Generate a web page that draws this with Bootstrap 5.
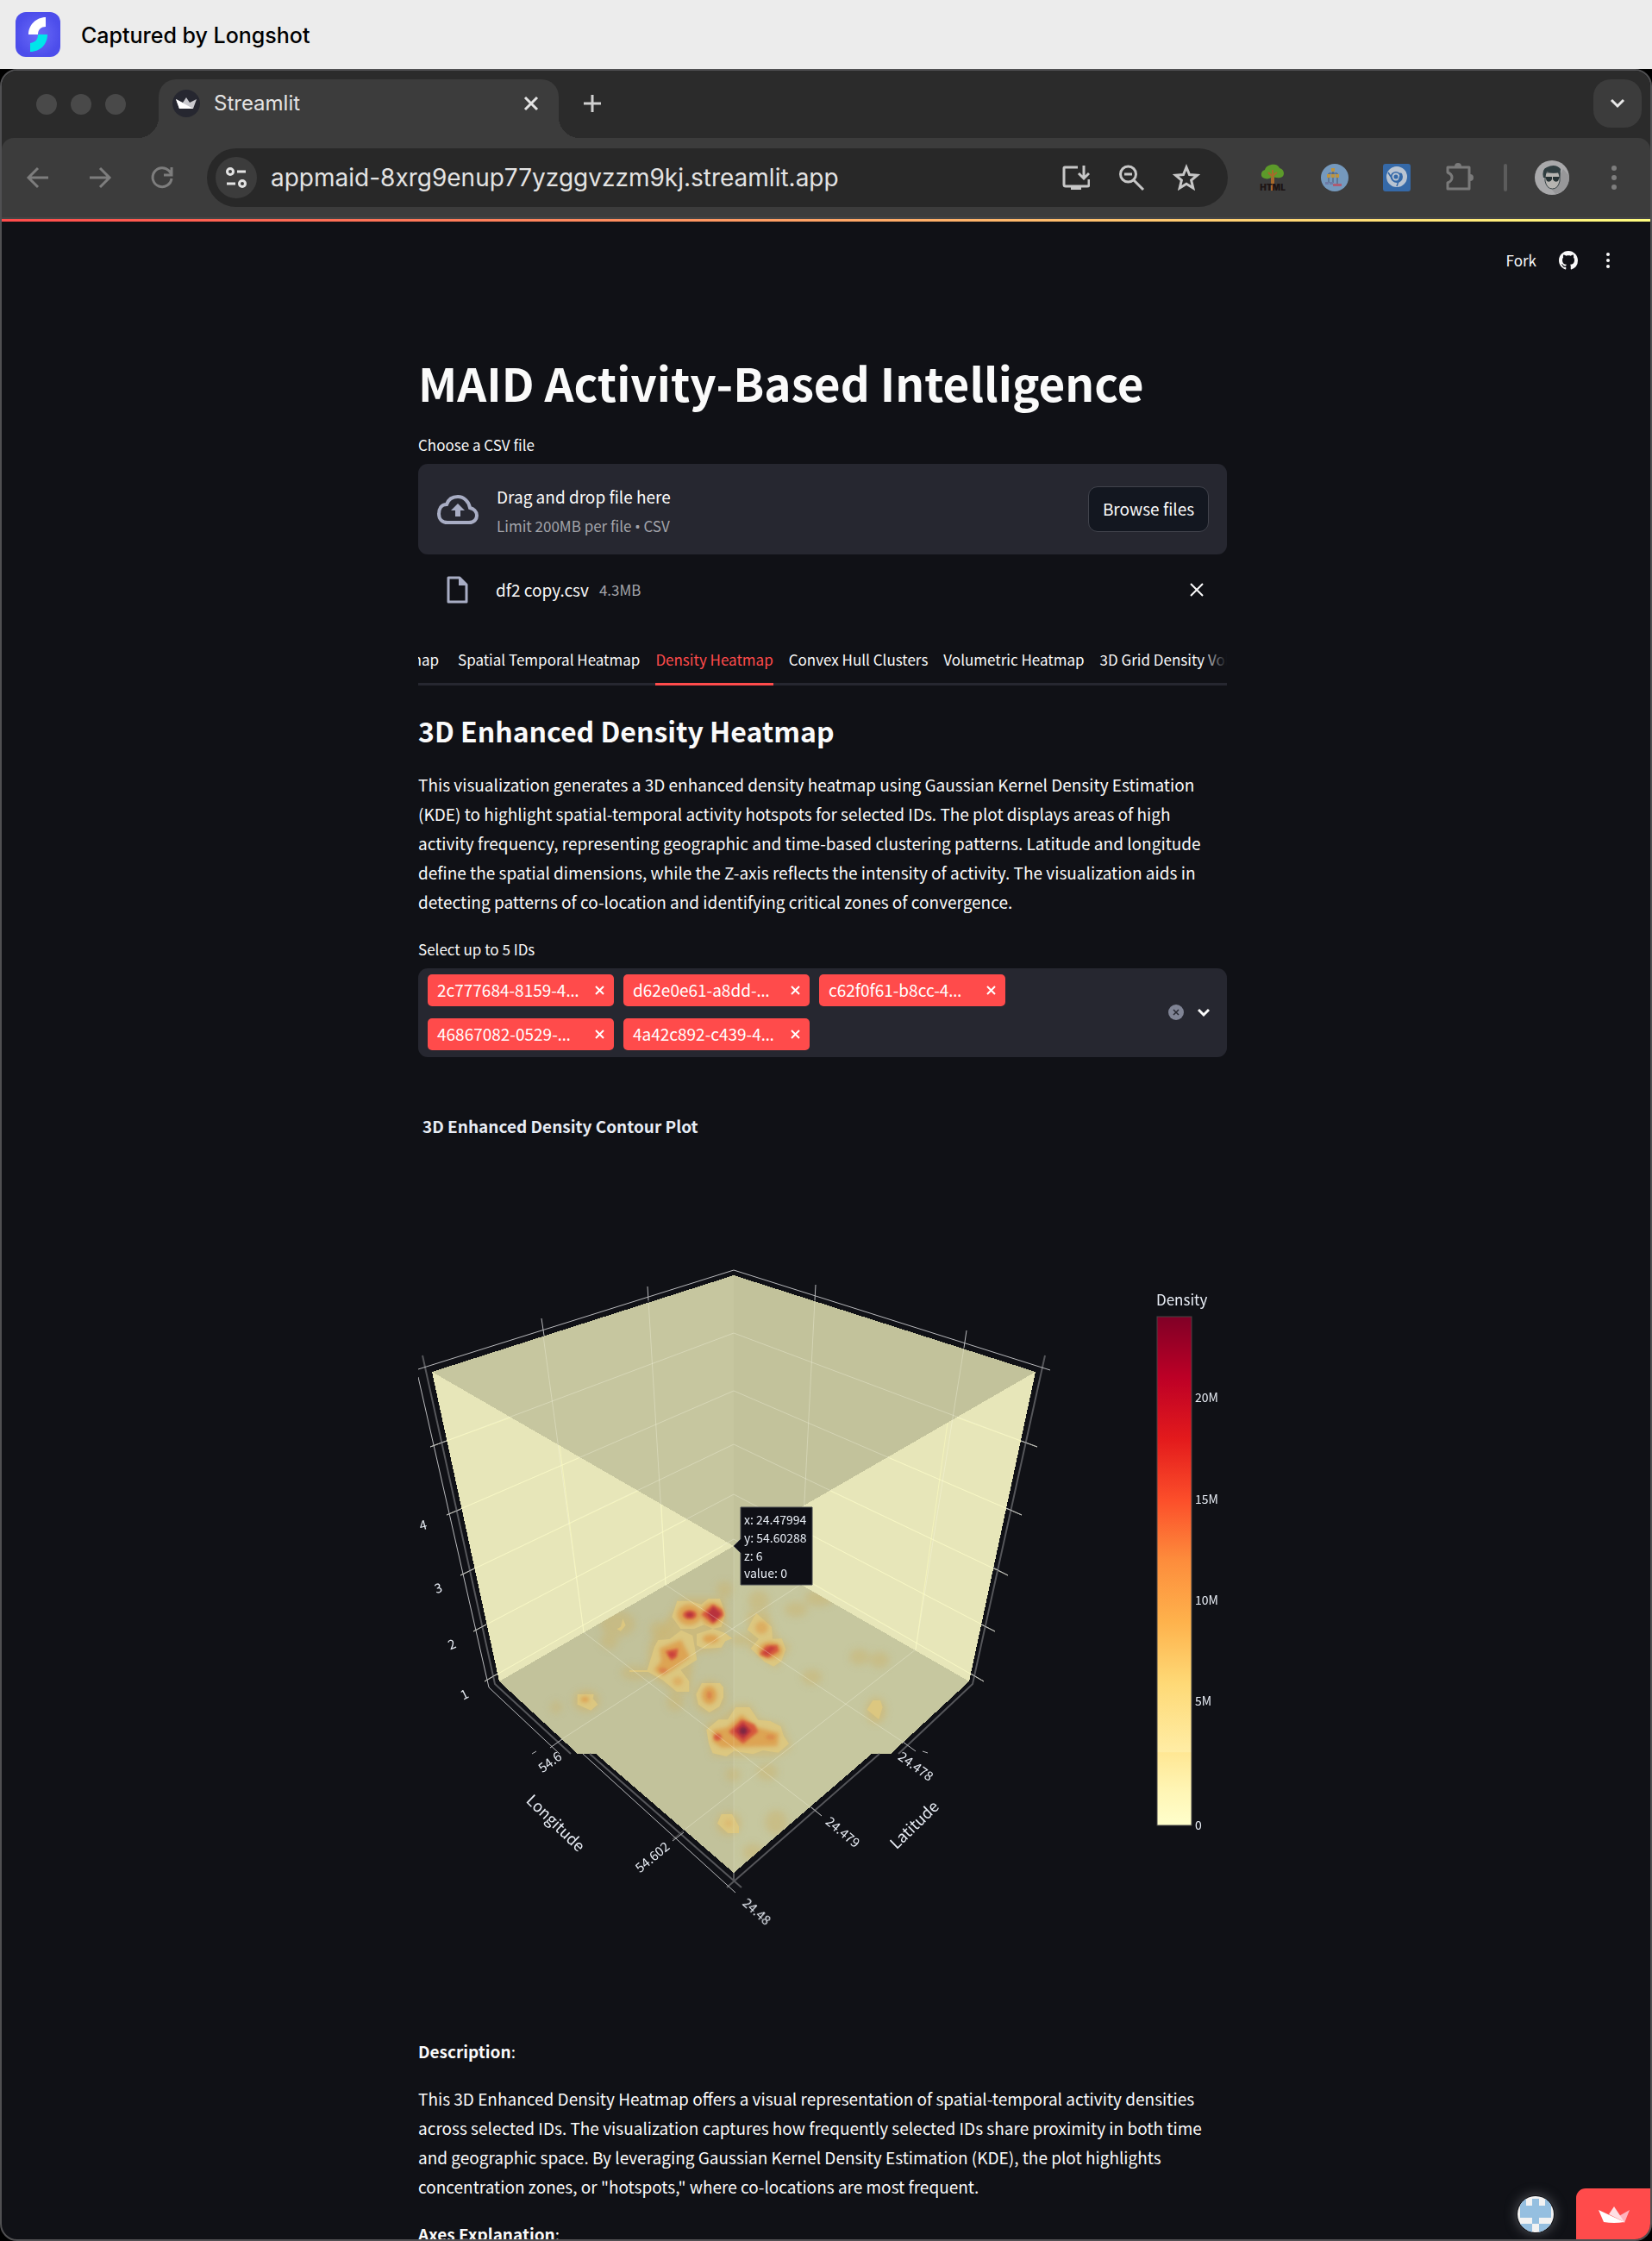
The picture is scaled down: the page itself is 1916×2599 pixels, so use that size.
<!DOCTYPE html>
<html lang="en">
<head>
<meta charset="utf-8">
<meta name="viewport" content="width=device-width, initial-scale=1">
<title>Streamlit</title>
<link href="https://cdn.jsdelivr.net/npm/bootstrap@5.3.0/dist/css/bootstrap.min.css" rel="stylesheet">
<style>
  :root { --ui: Inter, "Liberation Sans", sans-serif; --src: "Noto Sans CJK SC", "Noto Sans", sans-serif; }
  body { background: #000; height: 100vh; overflow: hidden; font-family: var(--src); color: #fafafa; }
  svg { display: block; flex: none; }
  button { font-family: inherit; font-weight: inherit; color: inherit; background: none; border: 0; padding: 0; }
  .capbar { height: 80px; background: #ececec; color: #000; font: 500 25px/80px var(--ui); padding-left: 18px; gap: 24px; }
  .capbar span { padding-top: 2px; }
  .win { border: 2px solid #505052; border-radius: 20px; background: #101116; min-height: 0; }
  .tabstrip { height: 78px; background: #2b2b2b; padding: 10px 10px 0 40px; font-family: var(--ui); }
  .lamps { padding-bottom: 10px; }
  .lamp { width: 24px; height: 24px; border-radius: 50%; background: #494949; }
  .btab { width: 464px; height: 68px; margin-left: 38px; background: #3c3c3c; border-radius: 20px 20px 0 0; padding: 0 21px 12px 16px; font-size: 24px; color: #e3e3e3; position: relative; }
  .btab::before, .btab::after { content: ""; position: absolute; bottom: 0; width: 24px; height: 24px; }
  .btab::before { right: 100%; background: radial-gradient(circle at 0 0, transparent 24px, #3c3c3c 24px); }
  .btab::after { left: 100%; background: radial-gradient(circle at 100% 0, transparent 24px, #3c3c3c 24px); }
  .menubtn { width: 56px; height: 56px; border-radius: 20px; background: #3c3c3c; }
  .under { background: #2b2b2b; }
  .toolbar { height: 94px; background: #3c3c3c; border-bottom: 2px solid #464646; padding: 0 38px 0 18px; color: #7d7d7d; border-radius: 14px 14px 0 0; }
  .navs { gap: 24px; margin-right: 28px; }
  .exts { gap: 32px; margin-left: 36px; }
  .pill { height: 68px; border-radius: 34px; background: #282828; padding: 0 32px 0 10px; }
  .site { width: 48px; height: 48px; border-radius: 50%; background: #3c3c3c; margin-right: 16px; }
  .pill input { background: none; border: 0; outline: 0; color: #e3e3e3; font: 400 28px/40px var(--ui); padding: 0; min-width: 0; }
  .rainbow { height: 3px; flex: none; background: linear-gradient(90deg, #ff4b4b, #fffd80); }
  .apphead { height: 90px; padding-right: 40px; gap: 26px; font-size: 17px; }
  .apphead a { color: #fafafa; text-decoration: none; }
  .page { max-width: 938px; width: 100%; margin-left: auto; margin-right: auto; padding-top: 61px; }
  .shift { padding-right: 8px; }
  h1 { font-size: 53px; line-height: 70px; font-weight: 700; margin-bottom: 26px; }
  h2 { font-size: 32px; line-height: 46px; font-weight: 700; margin: 29px 0 23px; }
  p, .para { font-size: 19px; line-height: 34px; margin: 0; }
  .fieldname { display: block; font-size: 17px; line-height: 24px; margin-bottom: 10px; }
  .idsname { margin-top: 26px; }
  .drop { height: 105px; background: #262730; border-radius: 11px; padding: 0 21px; }
  .droptext { padding-top: 5px; }
  .body19 { font-size: 19px; line-height: 34px; }
  .dim { font-size: 17px; line-height: 34px; color: #a3a4aa; }
  .browse { width: 140px; height: 53px; border: 1px solid #41434c; border-radius: 11px; background: #131720; font-size: 19px; }
  .filerow { height: 82px; padding: 0 26px 0 32px; }
  .tabs { margin-top: 13px; gap: 18px; overflow: hidden; box-shadow: inset 0 -3px #262730; position: relative; height: 57px; }
  .tabs button { font-size: 17px; white-space: nowrap; height: 57px; border-bottom: 3px solid transparent; flex: none; }
  .tabs .on { color: #ff4b4b; border-color: #ff4b4b; }
  .cutoff { width: 24px; overflow: hidden; flex: none; }
  .tabs::after { content: ""; position: absolute; right: 0; top: 0; width: 30px; height: 54px; background: linear-gradient(90deg, transparent, #101116); }
  .multi { background: #262730; border-radius: 11px; padding: 7px 20px 8px 11px; }
  .chips { gap: 14px 11px; }
  .chip { width: 216px; height: 37px; border-radius: 5px; background: #ff4b4b; padding: 0 11px; font-size: 19px; color: #fff; }
  .dots { font-family: "Noto Sans", sans-serif; }
  .chips input { width: 60px; height: 37px; border: 0; outline: 0; background: none; color: #fff; }
  .plot { margin-top: 44px; width: 100%; height: auto; }
  .plot text { fill: #e8edf5; font-family: var(--src); }
  .tick { font-size: 15px; text-anchor: middle; }
  .axis { font-size: 18px; text-anchor: middle; }
  .afterplot { margin-top: 32px; }
  .desc { margin-top: 21px; }
  .host { right: 111px; bottom: 7px; position: absolute; border-radius: 50%; box-shadow: 0 0 14px #55575c; }
  .crown { position: absolute; right: -2px; bottom: -2px; width: 88px; height: 61px; background: #ff4b4b; border-radius: 11px 0 20px 0; }
</style>
</head>
<body class="d-flex flex-column">

<div class="capbar d-flex align-items-center flex-shrink-0">
  <svg width="52" height="52" viewBox="0 0 52 52"><defs><radialGradient id="lg"><stop offset="0" stop-color="#6a6bf8"/><stop offset="1" stop-color="#4c4deb"/></radialGradient></defs><rect width="52" height="52" rx="12" fill="url(#lg)"/><path d="M15 26C15 15 24 6 35 6V17C30 17 26 20 26 26Z" fill="#fff"/><path d="M37 26C37 37 29 46 17 46V36C23 35 26 32 26 26Z" fill="#00e5ea"/></svg>
  <span>Captured by Longshot</span>
</div>

<div class="win d-flex flex-column flex-grow-1 position-relative overflow-hidden">
  <div class="tabstrip d-flex flex-shrink-0">
    <div class="lamps d-flex gap-3 align-items-center">
      <span class="lamp"></span><span class="lamp"></span><span class="lamp"></span>
    </div>
    <div class="btab d-flex align-items-center">
      <svg width="32" height="32" viewBox="0 0 32 32"><circle cx="16" cy="16" r="16" fill="#262730"/><path d="M4 11L12 15 16 9 20 15 28 11 24 22H8Z" fill="#c9c9ce"/><path d="M4 11L24 22H8Z" fill="#fff"/></svg>
      <span class="ms-3 flex-grow-1">Streamlit</span>
      <button type="button" aria-label="Close tab"><svg width="22" height="22" viewBox="0 0 22 22" stroke="#e3e3e3" stroke-width="3"><path d="M4 4L18 18M18 4L4 18"/></svg></button>
    </div>
    <button type="button" class="ms-4 ps-1 pb-2 mb-1" aria-label="New tab"><svg width="22" height="22" viewBox="0 0 22 22" stroke="#d0d0d0" stroke-width="3"><path d="M11 1V21M1 11H21"/></svg></button>
    <button type="button" class="menubtn ms-auto d-flex align-items-center justify-content-center" aria-label="Search tabs"><svg width="20" height="20" viewBox="0 0 20 20" fill="none" stroke="#e8e8e8" stroke-width="3"><path d="M3 6L10 13 17 6"/></svg></button>
  </div>
  <div class="under flex-shrink-0">
  <div class="toolbar d-flex align-items-center">
    <div class="navs d-flex">
      <button type="button" aria-label="Back"><svg width="48" height="48" viewBox="0 0 48 48" fill="none" stroke="currentColor" stroke-width="3"><path d="M36 24H14M24 13L13 24 24 35"/></svg></button>
      <button type="button" aria-label="Forward"><svg width="48" height="48" viewBox="0 0 48 48" fill="none" stroke="currentColor" stroke-width="3"><path d="M12 24H34M24 13L35 24 24 35"/></svg></button>
      <button type="button" aria-label="Reload"><svg width="48" height="48" viewBox="0 0 48 48" fill="none" stroke="currentColor" stroke-width="3"><path d="M35 25A11 11 0 1 1 32 16L34.500 19M35 12V21H26"/></svg></button>
    </div>
    <div class="pill d-flex align-items-center flex-grow-1">
      <button type="button" class="site d-flex align-items-center justify-content-center" aria-label="Site information"><svg width="28" height="28" viewBox="0 0 28 28" fill="none" stroke="#e3e3e3" stroke-width="3"><circle cx="7" cy="7" r="3.500"/><path d="M15 7H25M3 21H13"/><circle cx="21" cy="21" r="3.500"/></svg></button>
      <input class="flex-grow-1" type="text" aria-label="Address" value="appmaid-8xrg9enup77yzggvzzm9kj.streamlit.app">
      <div class="d-flex gap-4 align-items-center">
        <button type="button" aria-label="Install"><svg width="32" height="32" viewBox="0 0 32 32" fill="none" stroke="#c7c7c7" stroke-width="3"><path d="M18 4H3Q2 4 2 5V24Q2 26 4 26H29Q31 26 31 24V18M25 2V16M19 11L25 17 31 11"/><path d="M10 28H22" stroke-width="4"/></svg></button>
        <button type="button" class="mx-2" aria-label="Zoom"><svg width="32" height="32" viewBox="0 0 32 32" fill="none" stroke="#c7c7c7" stroke-width="3"><circle cx="12.500" cy="12" r="9"/><path d="M8 12H17M19 19L30 30"/></svg></button>
        <button type="button" aria-label="Bookmark"><svg width="32" height="32" viewBox="0 0 32 32" fill="none" stroke="#c7c7c7" stroke-width="3"><path d="M16 4L19.500 12.500 28.500 13.200 21.600 19 23.800 28 16 23.200 8.200 28 10.400 19 3.500 13.200 12.500 12.500Z"/></svg></button>
      </div>
    </div>
    <div class="exts d-flex align-items-center">
      <svg class="overflow-visible" width="32" height="32" viewBox="0 0 32 32"><path d="M14 14H18L18 31H14Z" fill="#a8692b"/><path d="M7 17C1 16 2 8 7 7 8 0 22-2 24 5 30 6 31 15 25 16 20 17 18 15 16 15 13 17 10 18 7 17Z" fill="#5c9a2a"/><path d="M16 20V7M16 15L11 10M16 14L21 10" stroke="#a8692b" stroke-width="2"/><text x="16" y="31" font-size="10" font-weight="900" font-family="Inter, sans-serif" text-anchor="middle" fill="#1d1414">HTML</text></svg>
      <svg class="ms-2" width="32" height="32" viewBox="0 0 32 32"><circle cx="16" cy="16" r="16" fill="#7599bd"/><path d="M14 9V11H9V22M14 11V22M14 11H19V23" fill="none" stroke="#4c5870"/><path d="M12 5h4v4h-4zM7 12h4v4H7zM12 12h4v4h-4zM17 12h4v4h-4z" fill="#bd9440"/><path d="M5 21h4v3H5zM10 21h4v3h-4z" fill="#6e7ba6"/><path d="M14 23h10v3H14z" fill="#ad5c72"/></svg>
      <svg class="ms-2" width="32" height="32" viewBox="0 0 32 32"><rect width="32" height="32" rx="3" fill="#3569a8"/><circle cx="16" cy="15" r="9.500" fill="none" stroke="#b9c4d2" stroke-width="5"/><path d="M6 10Q10 2 19 4L27 10 16 11Z" fill="#b9c4d2"/><circle cx="15" cy="15" r="6" fill="#3569a8"/><circle cx="15" cy="15" r="3.500" fill="none" stroke="#b9c4d2" stroke-width="2"/><path d="M20 14L16 26M11 18L6 10" stroke="#3569a8" stroke-width="1.500"/></svg>
      <svg class="ms-2" width="36" height="36" viewBox="0 0 36 36"><path d="M3 6H28V31H3V24Q8 22 8 18T3 12Z" fill="none" stroke="#7a7a7a" stroke-width="3" stroke-linejoin="round"/><path d="M11 5A4 4 0 0 1 19 5ZM29 14A4 4 0 0 1 29 22Z" fill="#7a7a7a"/></svg>
      <svg width="4" height="32"><rect width="4" height="32" rx="2" fill="#5c5c5c"/></svg>
      <svg width="40" height="40" viewBox="0 0 40 40"><circle cx="20" cy="20" r="20" fill="#a9a9ab"/><path d="M33 10L40 18A20 20 0 0 1 24 39L20 34Z" fill="#979799"/><path d="M12 14H29V24Q27 33 20.500 33 14 33 12 24Z" fill="#b6b4b1" stroke="#384346"/><path d="M10 20Q8 10 14 8 24 3 30 10L29 20 27 14Q20 16 14 13L12 20Z" fill="#2f3d40"/><path d="M12 19H20V22Q18 26 14 24ZM21 19H29L27 24Q23 26 21 22Z" fill="#263234"/></svg>
      <button type="button" class="ms-3" aria-label="Menu"><svg width="8" height="28" fill="#7d7d7d"><circle cx="4" cy="3" r="3"/><circle cx="4" cy="14" r="3"/><circle cx="4" cy="25" r="3"/></svg></button>
    </div>
  </div>
  </div>
  <div class="rainbow"></div>

  <header class="apphead d-flex justify-content-end align-items-center flex-shrink-0">
    <a href="#">Fork</a>
    <a href="#" aria-label="GitHub"><svg width="22" height="22" viewBox="0 0 16 16" fill="#fafafa"><path d="M8 0C3.580 0 0 3.580 0 8c0 3.540 2.290 6.530 5.470 7.590.4.070.55-.17.55-.38 0-.19-.01-.82-.01-1.490-2.010.37-2.530-.49-2.690-.94-.09-.23-.48-.94-.82-1.130-.28-.15-.68-.52-.01-.53.63-.01 1.080.58 1.230.82.72 1.210 1.870.87 2.330.66.07-.52.28-.87.51-1.070-1.780-.2-3.640-.89-3.640-3.950 0-.87.31-1.590.82-2.150-.08-.2-.36-1.020.08-2.120 0 0 .67-.21 2.200.82.64-.18 1.320-.27 2-.27s1.360.09 2 .27c1.530-1.040 2.200-.82 2.200-.82.44 1.100.16 1.920.08 2.120.51.56.82 1.270.82 2.150 0 3.070-1.870 3.750-3.650 3.950.29.25.54.73.54 1.480 0 1.070-.01 1.930-.01 2.200 0 .21.15.46.55.38A8 8 0 0 0 16 8c0-4.420-3.580-8-8-8z"/></svg></a>
    <button type="button" class="px-1" aria-label="App menu"><svg width="10" height="20" fill="#fafafa"><circle cx="5" cy="3" r="2"/><circle cx="5" cy="10" r="2"/><circle cx="5" cy="17" r="2"/></svg></button>
  </header>

  <div class="shift">
  <main class="page">
    <h1>MAID Activity-Based Intelligence</h1>

    <label class="fieldname" for="browse">Choose a CSV file</label>
    <div class="drop d-flex align-items-center">
      <svg width="50" height="36" viewBox="0 0 50 36"><path d="M13 33H38C44 33 47 29 47 25 47 20 43 17 39 16 38 9 32 3 25 3 19 3 14 6 12 12 6 12 3 17 3 23 3 29 7 33 13 33Z" fill="none" stroke="#a8adc4" stroke-width="4"/><path d="M25 11L33 19H28V26H22V19H17Z" fill="#a8adc4"/></svg>
      <div class="droptext ms-3 ps-1 d-flex flex-column flex-grow-1">
        <span class="body19">Drag and drop file here</span>
        <span class="dim">Limit 200MB per file <span class="dots">•</span> CSV</span>
      </div>
      <button type="button" id="browse" class="browse">Browse files</button>
    </div>
    <div class="filerow d-flex align-items-center">
      <svg width="26" height="32" viewBox="0 0 26 32"><path d="M3 2H16L24 10V30H3Z" fill="none" stroke="#a8adc4" stroke-width="3" stroke-linejoin="round"/><path d="M15 2V11H24Z" fill="#a8adc4"/></svg>
      <span class="body19 ms-4 ps-2">df2 copy.csv</span>
      <span class="dim ms-2 ps-1 flex-grow-1">4.3MB</span>
      <button type="button" aria-label="Remove file"><svg width="18" height="18" viewBox="0 0 18 18" stroke="#fafafa" stroke-width="2"><path d="M2 2L16 16M16 2L2 16"/></svg></button>
    </div>

    <div class="tabs d-flex" role="tablist">
      <div class="cutoff d-flex justify-content-end me-1"><button type="button" role="tab">Heatmap</button></div>
      <button type="button" role="tab">Spatial Temporal Heatmap</button>
      <button type="button" role="tab" class="on" aria-selected="true">Density Heatmap</button>
      <button type="button" role="tab">Convex Hull Clusters</button>
      <button type="button" role="tab">Volumetric Heatmap</button>
      <button type="button" role="tab">3D Grid Density Volume</button>
    </div>

    <h2>3D Enhanced Density Heatmap</h2>
    <p>This visualization generates a 3D enhanced density heatmap using Gaussian Kernel Density Estimation (KDE) to highlight spatial-temporal activity hotspots for selected IDs. The plot displays areas of high activity frequency, representing geographic and time-based clustering patterns. Latitude and longitude define the spatial dimensions, while the Z-axis reflects the intensity of activity. The visualization aids in detecting patterns of co-location and identifying critical zones of convergence.</p>

    <label class="fieldname idsname" for="ids">Select up to 5 IDs</label>
    <div class="multi d-flex align-items-center">
      <div class="chips d-flex flex-wrap flex-grow-1">
        <span class="chip d-flex align-items-center justify-content-between"><span>2c777684-8159-4<span class="dots">…</span></span><button type="button" aria-label="Remove"><svg width="11" height="11" viewBox="0 0 11 11" stroke="#fff" stroke-width="2"><path d="M1 1L10 10M10 1L1 10"/></svg></button></span>
        <span class="chip d-flex align-items-center justify-content-between"><span>d62e0e61-a8dd-<span class="dots">…</span></span><button type="button" aria-label="Remove"><svg width="11" height="11" viewBox="0 0 11 11" stroke="#fff" stroke-width="2"><path d="M1 1L10 10M10 1L1 10"/></svg></button></span>
        <span class="chip d-flex align-items-center justify-content-between"><span>c62f0f61-b8cc-4<span class="dots">…</span></span><button type="button" aria-label="Remove"><svg width="11" height="11" viewBox="0 0 11 11" stroke="#fff" stroke-width="2"><path d="M1 1L10 10M10 1L1 10"/></svg></button></span>
        <span class="w-100 d-flex chips">
        <span class="chip d-flex align-items-center justify-content-between"><span>46867082-0529-<span class="dots">…</span></span><button type="button" aria-label="Remove"><svg width="11" height="11" viewBox="0 0 11 11" stroke="#fff" stroke-width="2"><path d="M1 1L10 10M10 1L1 10"/></svg></button></span>
        <span class="chip d-flex align-items-center justify-content-between"><span>4a42c892-c439-4<span class="dots">…</span></span><button type="button" aria-label="Remove"><svg width="11" height="11" viewBox="0 0 11 11" stroke="#fff" stroke-width="2"><path d="M1 1L10 10M10 1L1 10"/></svg></button></span>
        <input id="ids" type="text"></span>
      </div>
      <button type="button" aria-label="Clear all"><svg width="18" height="18" viewBox="0 0 18 18"><circle cx="9" cy="9" r="9" fill="#808495"/><path d="M6 6L12 12M12 6L6 12" stroke="#262730" stroke-width="1.500"/></svg></button>
      <button type="button" class="ms-3" aria-label="Open list"><svg width="14" height="14" viewBox="0 0 14 14" fill="none" stroke="#fafafa" stroke-width="3"><path d="M1 4L7 10 13 4"/></svg></button>
    </div>

    <svg class="plot" viewBox="485 1270 938 1060" role="img" aria-label="3D Enhanced Density Contour Plot">
      <defs>
        <linearGradient id="ylorrd" x1="0" y1="1" x2="0" y2="0">
          <stop offset="0" stop-color="#ffffcc"/><stop offset=".07" stop-color="#fff5b4"/><stop offset=".143" stop-color="#ffe794"/><stop offset=".144" stop-color="#ffeda5"/><stop offset=".28" stop-color="#fed976"/><stop offset=".4" stop-color="#feb24c"/><stop offset=".52" stop-color="#fd8d3c"/><stop offset=".64" stop-color="#fc4e2a"/><stop offset=".76" stop-color="#e31a1c"/><stop offset=".88" stop-color="#bd0026"/><stop offset="1" stop-color="#800026"/>
        </linearGradient>
        <filter id="soft" x="-50%" y="-50%" width="200%" height="200%"><feGaussianBlur stdDeviation="12"/></filter>
        <filter id="mid" x="-50%" y="-50%" width="200%" height="200%"><feGaussianBlur stdDeviation="7"/></filter>
        <filter id="core" x="-50%" y="-50%" width="200%" height="200%"><feGaussianBlur stdDeviation="4"/></filter>
        <clipPath id="floor"><path d="M579 1950L851 1793 1124 1950 1033 2034H1011L851 2172 691 2034H670Z"/></clipPath>
      </defs>
      <text x="490" y="1314" font-size="19" font-weight="700">3D Enhanced Density Contour Plot</text>

      <!-- cube faces -->
      <g shape-rendering="crispEdges">
      <path d="M851 1479V1793L501 1591Z" fill="#c6c69f"/>
      <path d="M851 1479L1201 1591 851 1793Z" fill="#c2c29b"/>
      <path d="M501 1591L851 1793 579 1950Z" fill="#e7e6b9"/>
      <path d="M1201 1591L851 1793 1124 1950Z" fill="#e7e6b9"/>
      <path d="M579 1950L851 1793V2172L691 2034H670Z" fill="#c2c29b"/>
      <path d="M851 1793L1124 1950 1033 2034H1011L851 2172Z" fill="#c6c79f"/>
      </g>

      <!-- density on the floor -->
      <g clip-path="url(#floor)"><g transform="translate(640 1840) scale(.3333)">
        <g fill="#d3b160" opacity=".5" filter="url(#soft)">
          <path d="M410 100L450 40H600L610 130 590 220 500 230 490 270 480 370 430 370 330 300 340 200Z"/>
          <path d="M535 480L600 450 640 410H690L720 460 800 480 835 560 780 590 560 590Z"/>
          <path d="M680 90H750L780 170 830 210 780 285 690 220Z"/>
          <ellipse cx="120" cy="398" rx="45" ry="38"/><ellipse cx="550" cy="385" rx="55" ry="58"/><ellipse cx="1128" cy="432" rx="34" ry="44"/><ellipse cx="615" cy="825" rx="42" ry="40"/>
        </g>
        <g fill="#cbb46f" opacity=".5" filter="url(#soft)">
          <ellipse cx="230" cy="130" rx="60" ry="45"/><ellipse cx="200" cy="190" rx="30" ry="28"/><ellipse cx="1070" cy="245" rx="34" ry="28"/><ellipse cx="1140" cy="255" rx="34" ry="28"/><ellipse cx="905" cy="315" rx="35" ry="28"/><ellipse cx="850" cy="80" rx="40" ry="26"/><ellipse cx="720" cy="50" rx="36" ry="36"/><ellipse cx="600" cy="10" rx="28" ry="28"/><ellipse cx="290" cy="300" rx="50" ry="26"/><ellipse cx="430" cy="400" rx="30" ry="34"/><ellipse cx="630" cy="655" rx="26" ry="24"/><ellipse cx="750" cy="645" rx="36" ry="30"/><ellipse cx="780" cy="820" rx="38" ry="42"/><ellipse cx="700" cy="925" rx="36" ry="30"/><ellipse cx="930" cy="40" rx="50" ry="28"/><ellipse cx="370" cy="150" rx="30" ry="30"/><ellipse cx="660" cy="185" rx="40" ry="20"/><ellipse cx="15" cy="420" rx="20" ry="20"/>
        </g>
        <g fill="#dcc780">
          <path d="M418 105L436 50H480L520 62 545 42H585L604 95 590 140 560 147 530 133 495 147H448Z"/>
          <path d="M504 165L560 147 604 162 628 181 604 190 590 212 530 216 504 205Z"/>
          <path d="M357 210L370 186 410 183 450 152 490 170 505 255 448 290 478 330V366H435L385 325 335 297H270V291H332Z"/>
          <path d="M502 375L522 336H585L597 350V385L583 418 548 438 510 410Z"/>
          <path d="M680 150L702 108 712 93 765 140 768 182 800 181 814 218 800 258 772 278 740 262 692 215 720 182Z"/>
          <path d="M538 498L580 463H612L640 420H688L718 464 760 468 797 487 806 518 825 547 788 578 735 570 700 583 634 572 608 591 560 580 546 545Z"/>
          <path d="M89 375H146L143 390 160 410 136 431 89 410Z"/><path d="M1097 428L1117 396H1143L1151 420 1138 462Z"/><path d="M576 824L590 792H627L651 835V858H613Z"/><path d="M226 148L240 140 247 112 257 135 240 155Z"/>
        </g>
        <g fill="#dd9d4b" opacity=".85" filter="url(#mid)">
          <ellipse cx="478" cy="98" rx="42" ry="36"/><ellipse cx="558" cy="96" rx="40" ry="40"/><ellipse cx="553" cy="182" rx="28" ry="16"/><path d="M375 215L450 185 480 245 420 290 385 310 355 290 380 260Z"/><ellipse cx="438" cy="330" rx="18" ry="16" opacity=".6"/><ellipse cx="548" cy="378" rx="26" ry="32"/><ellipse cx="730" cy="143" rx="22" ry="22" opacity=".7"/><ellipse cx="760" cy="222" rx="42" ry="30"/><path d="M560 500L610 490 660 445 715 490 790 510 785 555 590 560 560 540Z"/><ellipse cx="115" cy="393" rx="14" ry="10"/><ellipse cx="615" cy="824" rx="14" ry="14" opacity=".3"/>
        </g>
        <g fill="#d75a3d" filter="url(#core)">
          <ellipse cx="480" cy="98" rx="24" ry="16"/><path d="M520 97L560 62 592 80 598 100 560 130Z"/><path d="M395 225L440 215 435 245 415 258Z"/><ellipse cx="387" cy="292" rx="14" ry="10" opacity=".4"/><path d="M722 235L745 205 785 203 790 225 752 248Z"/><path d="M615 505L660 462 705 480 718 505 665 547Z"/><ellipse cx="577" cy="524" rx="14" ry="12"/><ellipse cx="548" cy="378" rx="9" ry="14" opacity=".4"/><ellipse cx="760" cy="524" rx="16" ry="10" opacity=".3"/>
        </g>
        <g fill="#b8303c" filter="url(#core)"><ellipse cx="480" cy="98" rx="13" ry="9"/><path d="M540 96L562 68 590 96 562 124Z"/><path d="M635 502L665 472 695 502 665 532Z"/><ellipse cx="418" cy="236" rx="11" ry="8" fill="#c9403c"/><path d="M732 234L762 208 778 214 750 238Z" fill="#c63d3a"/></g>
        <circle cx="666" cy="502" r="12" fill="#7d2743" filter="url(#core)"/>
      </g></g>

      <!-- grid lines on the faces -->
      <g fill="none" stroke="#fffff0" stroke-opacity=".3">
        <path d="M562 1950L851 1785 1141 1950M549 1892L851 1733 1154 1892M534 1827L851 1675 1169 1827M518 1757L851 1613 1185 1757M499 1678L851 1546 1203 1678"/>
        <path d="M752 1508L772 1838 1050 2022M630 1549L677 1893 953 2106M945 1508L928 1838 650 2018M1118 1563L1062 1913 780 2133"/>
        <path d="M851 1793V2172" stroke-opacity=".15"/>
      </g>
      <g stroke="#ffffc0" stroke-opacity=".55" fill="none">
        <path d="M499 1678L592 1644M518 1757L671 1691M534 1827L740 1729M549 1892L795 1763M562 1950L838 1793M1203 1678L1110 1644M1185 1757L1032 1691M1169 1827L963 1729M1154 1892L942 1781M1141 1950L935 1832M649 1676L677 1893M767 1745L772 1838M1099 1650L1062 1913"/>
      </g>
      <!-- axes and ticks -->
      <g fill="none" stroke="#55565a" stroke-width="2">
        <path d="M490 1572L574 1953 662 2034M684 2034L860 2189M1212 1572L1128 1953 1042 2034M1020 2034L843 2189M851 2172V2181"/>
      </g>
      <g fill="none" stroke="#b9babd">
        <path d="M485 1588L851 1473 1218 1589M485 1597L567 1957 649 2034M676 2034L853 2195"/>
        <path d="M751 1492L752 1508M628 1529L631 1549M946 1490L945 1508M1121 1543L1118 1563M499 1678L518 1671M518 1757L535 1750M534 1827L550 1819M549 1892L564 1884M562 1950L577 1941M1203 1678L1184 1671M1185 1757L1167 1749M1169 1827L1152 1818M1154 1892L1138 1884M1141 1950L1126 1941M638 2027L652 2017M780 2135L793 2125M1062 2031L1047 2020M953 2106L941 2096"/>
        <path d="M617 2034L622 2031M1070 2031L1076 2033"/>
      </g>
      <!-- axis labels -->
      <g class="tick">
        <text transform="translate(492 1774) rotate(-15)">4</text><text transform="translate(510 1847) rotate(-18)">3</text><text transform="translate(526 1912) rotate(-22)">2</text><text transform="translate(541 1970) rotate(-26)">1</text>
        <text transform="translate(641 2048) rotate(-36)">54.6</text><text transform="translate(760 2158) rotate(-39)">54.602</text>
        <text transform="translate(1059 2053) rotate(36)">24.478</text><text transform="translate(974 2129) rotate(40)">24.479</text><text transform="translate(874 2221) rotate(42)">24.48</text>
      </g>
      <g class="axis"><text transform="translate(640 2119) rotate(44)">Longitude</text><text transform="translate(1065 2121) rotate(-44)">Latitude</text></g>

      <!-- hover label -->
      <path d="M851 1793L859 1785V1748H942V1838H859V1801Z" fill="#0f1016" stroke="#45464d"/>
      <g font-size="14"><text x="863" y="1768">x: 24.47994</text><text x="863" y="1789">y: 54.60288</text><text x="863" y="1810">z: 6</text><text x="863" y="1830">value: 0</text></g>

      <!-- colour scale -->
      <text x="1341" y="1514" font-size="17">Density</text>
      <rect x="1342" y="1527" width="40" height="590" fill="url(#ylorrd)" stroke="#444"/>
      <g font-size="14"><text x="1386" y="1626">20M</text><text x="1386" y="1744">15M</text><text x="1386" y="1861">10M</text><text x="1386" y="1978">5M</text><text x="1386" y="2122">0</text></g>
    </svg>

    <div class="para afterplot"><strong>Description</strong>:</div>
    <p class="desc">This 3D Enhanced Density Heatmap offers a visual representation of spatial-temporal activity densities across selected IDs. The visualization captures how frequently selected IDs share proximity in both time and geographic space. By leveraging Gaussian Kernel Density Estimation (KDE), the plot highlights concentration zones, or "hotspots," where co-locations are most frequent.</p>
    <div class="para desc"><strong>Axes Explanation</strong>:</div>
  </main>
  </div>

  <svg class="host" width="44" height="44" viewBox="0 0 44 44"><defs><clipPath id="disc"><circle cx="22" cy="22" r="21"/></clipPath></defs><g clip-path="url(#disc)"><path d="M0 0H44V44H0Z" fill="#f2f2f2"/><path d="M4 4H11V12H18V4H26V12H33V4H40V26H26V33H18V26H4ZM0 33H18V44H0ZM26 33H44V44H26Z" fill="#95bfe0"/></g></svg>
  <button type="button" class="crown d-flex align-items-center justify-content-center" aria-label="Hosted with Streamlit"><svg width="36" height="20" viewBox="0 0 36 20"><path d="M36 4L22 12 30 19Z" fill="#ffb3bd"/><path d="M18 0L30 18 12 9Z" fill="#ffdfe4"/><path d="M0 4L30 18Q18 20 6 18Z" fill="#fff"/></svg></button>
</div>

<script src="https://cdn.jsdelivr.net/npm/bootstrap@5.3.0/dist/js/bootstrap.bundle.min.js"></script>
</body>
</html>
